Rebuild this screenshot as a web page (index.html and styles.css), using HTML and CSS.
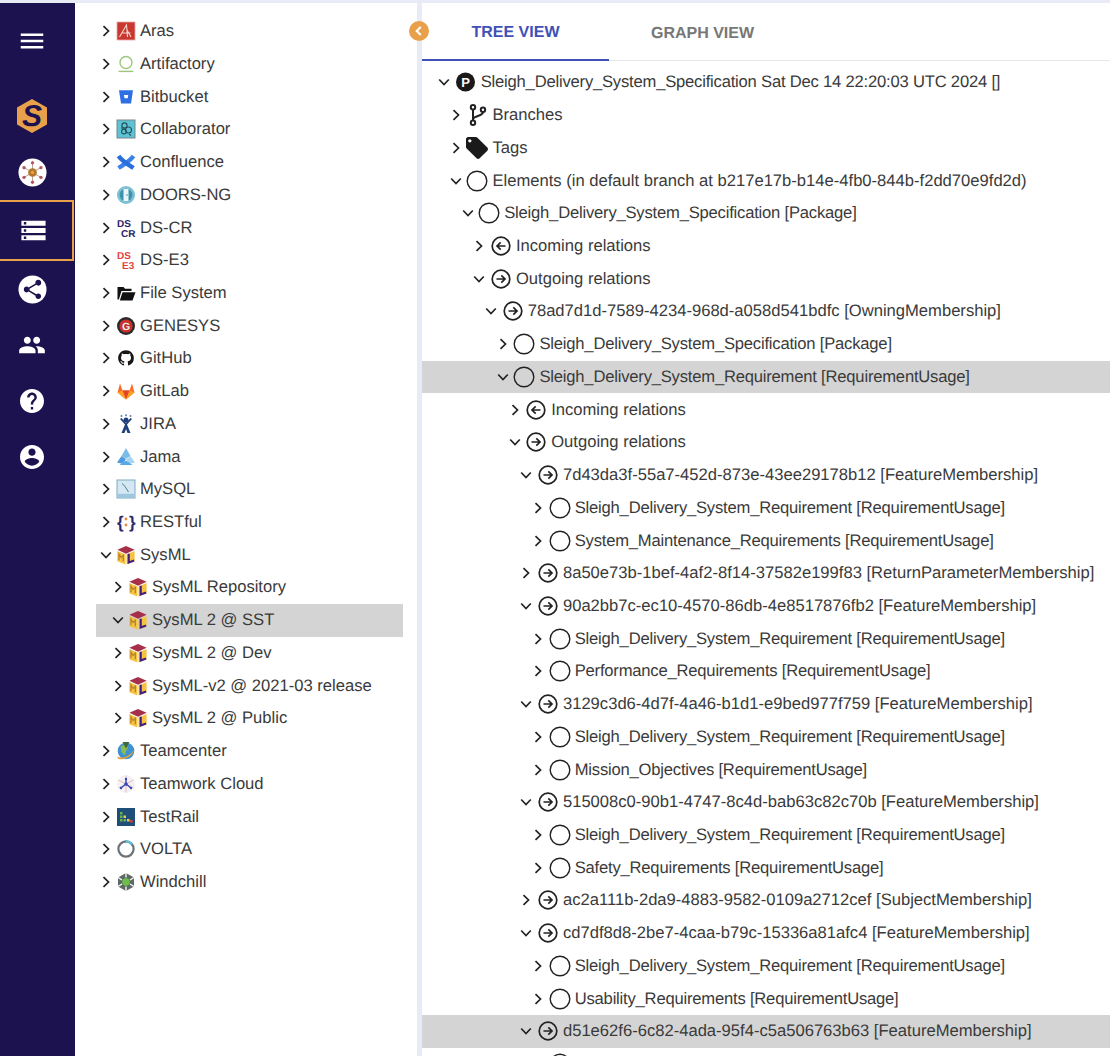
FILE: index.html
```html
<!DOCTYPE html>
<html>
<head>
    <meta charset="UTF-8">
    <meta name="viewport" content="width=device-width, initial-scale=1.0">
    <title>Tree View</title>
    <link rel="stylesheet" href="styles.css">
</head>
<body>
    <svg class="sprite" xmlns="http://www.w3.org/2000/svg">
        <symbol id="i-right" viewBox="0 0 12 12"><path d="M3.5 1.2 8.5 6l-5 4.8" fill="none" stroke="currentColor" stroke-width="1.7"/></symbol>
        <symbol id="i-down" viewBox="0 0 12 12"><path d="M1.2 3.5 6 8.5l4.8-5" fill="none" stroke="currentColor" stroke-width="1.7"/></symbol>
        <symbol id="i-circle" viewBox="0 0 22 22"><circle cx="11" cy="11" r="9.8" fill="none" stroke="#222" stroke-width="1.4"/></symbol>
        <symbol id="i-out" viewBox="0 0 22 22"><circle cx="11" cy="11" r="8.8" fill="none" stroke="#222" stroke-width="1.7"/><path d="M6.5 11h8M11.3 7.4 15 11l-3.7 3.6" fill="none" stroke="#222" stroke-width="1.7"/></symbol>
        <symbol id="i-in" viewBox="0 0 22 22"><circle cx="11" cy="11" r="8.8" fill="none" stroke="#222" stroke-width="1.7"/><path d="M15.5 11h-8M10.7 7.4 7 11l3.7 3.6" fill="none" stroke="#222" stroke-width="1.7"/></symbol>
        <symbol id="i-branch" viewBox="0 0 22 22"><g fill="none" stroke="#222" stroke-width="2"><circle cx="7" cy="3.2" r="2.2"/><circle cx="7" cy="18.8" r="2.2"/><circle cx="17" cy="5.8" r="2.2"/><path d="M7 5.400v11.200M17 8c0 4.500-10 3.400-10 7.600"/></g></symbol>
        <symbol id="i-tag" viewBox="2 2 20 20"><path d="M21.410 11.580l-9-9C12.050 2.220 11.550 2 11 2H4c-1.100 0-2 .9-2 2v7c0 .55.22 1.050.59 1.420l9 9c.36.36.86.58 1.410.58.55 0 1.050-.22 1.410-.59l7-7c.37-.36.59-.86.59-1.410 0-.55-.23-1.060-.59-1.420zM5.500 7C4.670 7 4 6.330 4 5.500S4.670 4 5.500 4 7 4.670 7 5.500 6.330 7 5.500 7z" fill="#1a1a1a"/></symbol>

        <symbol id="i-aras" viewBox="0 0 20 20"><rect x="1" y="1" width="18" height="18" fill="#c9382f" stroke="#e5a9a4" stroke-width=".8"/><path d="M3.500 16 10.500 4l1 12M6.500 12h8M11 9l4 7" fill="none" stroke="#f3d6d2" stroke-width="1.100"/></symbol>
        <symbol id="i-artifactory" viewBox="0 0 20 20"><circle cx="10" cy="8.500" r="6" fill="none" stroke="#9cc77c" stroke-width="1.400"/><path d="M2.500 17.400h15" stroke="#9cc77c" stroke-width="1.400"/></symbol>
        <symbol id="i-bitbucket" viewBox="0 0 20 20"><path d="M3 3.200h14l-2 13.300H5z" fill="#2f6fe4"/><path d="M8 8h4.200l-.5 3.200H8.500z" fill="#fff"/></symbol>
        <symbol id="i-collaborator" viewBox="0 0 20 20"><rect x="1" y="1" width="18" height="18" fill="#5cc3d3" stroke="#77858c" stroke-width="1"/><g fill="none" stroke="#25525f" stroke-width="1.100"><circle cx="8.500" cy="6.500" r="2.600"/><circle cx="12.500" cy="11" r="3"/><circle cx="8" cy="12.500" r="2.400"/><path d="M5 9h3M13 15l2 1.500"/></g></symbol>
        <symbol id="i-confluence" viewBox="0 0 20 20"><g fill="none" stroke-width="4.400"><path d="M17.500 4C14 9 10 11 2.500 16" stroke="#3c82ea"/><path d="M2.500 4C6 9 9.500 11 17.500 16" stroke="#2a6fdc"/></g></symbol>
        <symbol id="i-doors" viewBox="0 0 20 20"><circle cx="10" cy="10" r="9" fill="#7cc0d4"/><circle cx="10" cy="10" r="6.400" fill="#3d93ac"/><path d="M7.500 3.800h5v12.400h-5z" fill="#e9f5f8"/><circle cx="11" cy="10" r=".8" fill="#3d93ac"/></symbol>
        <symbol id="i-folder" viewBox="0 0 20 20"><path d="M1.500 4h6l1.500 1.800h6.500V8H5.500L2.900 16.500H1.500z" fill="#111"/><path d="M6.500 9.300h13L16.500 17.500H3.800z" fill="#111"/></symbol>
        <symbol id="i-github" viewBox="-2.200 -2.200 20.400 20.400"><path d="M8 0C3.580 0 0 3.580 0 8c0 3.540 2.290 6.530 5.470 7.590.4.070.55-.17.55-.38 0-.19-.01-.82-.01-1.490-2.010.37-2.530-.49-2.690-.94-.09-.23-.48-.94-.82-1.130-.28-.15-.68-.52-.01-.53.63-.01 1.080.58 1.230.82.72 1.210 1.870.87 2.330.66.07-.52.28-.87.51-1.070-1.780-.2-3.640-.89-3.640-3.950 0-.87.31-1.590.82-2.150-.08-.2-.36-1.020.08-2.120 0 0 .67-.21 2.200.82.64-.18 1.320-.27 2-.27.68 0 1.360.09 2 .27 1.530-1.040 2.200-.82 2.200-.82.44 1.100.16 1.920.08 2.120.51.56.82 1.270.82 2.150 0 3.070-1.870 3.750-3.650 3.950.29.25.54.73.54 1.480 0 1.070-.01 1.930-.01 2.200 0 .21.15.46.55.38A8.013 8.013 0 0016 8c0-4.420-3.580-8-8-8z" fill="#161616"/></symbol>
        <symbol id="i-gitlab" viewBox="0 0 20 20"><path d="M10 18.500 1.500 11.500 4 2.500l2.500 7h7l2.500-7 2.500 9z" fill="#fc6d26"/><path d="M10 18.500 6.500 9.500h7z" fill="#e24329"/><path d="M10 18.500 1.500 11.500 6.500 9.500zM10 18.500l8.500-7-5-2z" fill="#fca326"/></symbol>
        <symbol id="i-jira" viewBox="0 0 20 20"><circle cx="10" cy="6" r="2.500" fill="#1f3f78"/><path d="M4 5 9 10.500 5.500 19h3L10 15l1.500 4h3L11 10.500l5-5.500-1.500-1L10 9 5.500 4z" fill="#1f3f78"/><g fill="#5f7fb0"><circle cx="5.500" cy="2" r="1"/><circle cx="10" cy="1.300" r="1"/><circle cx="14.500" cy="2" r="1"/></g></symbol>
        <symbol id="i-jama" viewBox="0 0 20 20"><path d="M10 1 14.500 9 10 11.500 5.500 9z" fill="#7cbce8"/><path d="M1 15.500 5.500 9l4.500 3-3 5z" fill="#4d9be0"/><path d="M19 15.500 14.500 9 10 12l3 5z" fill="#a8d5f0"/><path d="M3.500 18h13L10 13.500z" fill="#5aa9e6"/></symbol>
        <symbol id="i-mysql" viewBox="0 0 20 20"><rect x="1" y="1" width="18" height="18" fill="#d3e8f3" stroke="#7fa9bf" stroke-width="1"/><path d="M6 4.500c2 1 4 4.500 6.500 8.500" fill="none" stroke="#55788c" stroke-width="1"/><path d="M2 14.800h16V19H2z" fill="#9cc7dc"/></symbol>
        <symbol id="i-sysml" viewBox="1 0 18 18.500"><path d="M10 1 18 4.500 10 8 2 4.500z" fill="#a6304a"/><path d="M2 5.500 9.500 8.800V18L2 15z" fill="#f6c342"/><path d="M10.500 8.800 18 5.500V15l-7.500 3z" fill="#f6c342"/><path d="M3.500 14V8.500l2 3 2-2V15" fill="none" stroke="#b8832a" stroke-width="1.200"/><path d="M12.500 8v8.200l5-1.800" fill="none" stroke="#44207c" stroke-width="2"/></symbol>
        <symbol id="i-teamcenter" viewBox="1 1 18 18"><circle cx="10" cy="10" r="7.500" fill="#3f92cf"/><path d="M5 6c3-2 6-1 7 1l-2 3-1 4-3-3z" fill="#8cbc54"/><path d="M2 15c4 2 11 1 16-7-2 7-10 11-15 9z" fill="#e6a13a"/><path d="M7 2 13 2 10 8z" fill="#3c6c3a"/></symbol>
        <symbol id="i-teamwork" viewBox="0 0 20 20"><circle cx="10" cy="10" r="9" fill="#f4f1f2"/><g stroke="#e2bcc2" stroke-width="1"><path d="M10 1.500v17M2.500 6l15 8M17.500 6l-15 8"/></g><path d="M10 5v5M10 10l-5 4M10 10l5 4" stroke="#3346b8" stroke-width="1.300"/><g fill="#3346b8"><circle cx="10" cy="10" r="1.700"/><circle cx="10" cy="5" r="1.200"/><circle cx="5" cy="14" r="1.200"/><circle cx="15" cy="14" r="1.200"/></g></symbol>
        <symbol id="i-testrail" viewBox="0 0 20 20"><rect x="1" y="1" width="18" height="18" fill="#1f4e79"/><g fill="#6cb24a"><rect x="4" y="5" width="2.500" height="2.500"/><rect x="4" y="8.500" width="2.500" height="2.500"/><rect x="4" y="12" width="2.500" height="2.500"/><rect x="7.500" y="12" width="2.500" height="2.500"/></g><rect x="7.500" y="8.500" width="2.500" height="2.500" fill="#f2c94c"/><rect x="11" y="12" width="2.500" height="2.500" fill="#f2c94c"/><rect x="14" y="13" width="2.500" height="2.500" fill="#d9413a"/></symbol>
        <symbol id="i-volta" viewBox="0 0 20 20"><circle cx="10" cy="10" r="7.600" fill="none" stroke="#6c7378" stroke-width="2.200"/><path d="M10 2.400a7.600 7.600 0 0 1 6 3" fill="none" stroke="#5cc0d8" stroke-width="2.200"/></symbol>
        <symbol id="i-windchill" viewBox="0 0 20 20"><path d="M10 1 18 5.500v9L10 19l-8-4.500v-9z" fill="#5c6a63"/><path d="M10 1v4.500M18 5.500 14 8M18 14.500 14 12M10 19v-4.500M2 14.500 6 12M2 5.500 6 8" stroke="#fff" stroke-width="1.300"/><circle cx="10" cy="10" r="3.800" fill="#6cbf4b"/></symbol>
    </svg>

    <div class="topline"></div>
    <div class="app">
        <nav class="sidebar">
            <div class="nav-item nav-menu">
                <svg class="nav-icon nav-icon-lg" viewBox="0 0 24 24"><path d="M3 18h18v-2H3v2zm0-5h18v-2H3v2zm0-7v2h18V6H3z" fill="#fff"/></svg>
            </div>
            <div class="nav-item nav-logo">
                <svg class="logo" viewBox="0 0 32 36">
                    <path d="M16 1 31 9.500v17L16 35 1 26.500v-17z" fill="#e9a04b"/>
                    <text x="16" y="28" text-anchor="middle" class="logo-s">S</text>
                </svg>
            </div>
            <div class="nav-item">
                <svg class="nav-icon nav-hub" viewBox="0 0 30 30">
                    <circle cx="15" cy="15" r="14.500" fill="#fff"/>
                    <path d="M15 3v24M4.600 9l20.800 12M25.400 9 4.600 21" stroke="#b9a18f" stroke-width="1"/>
                    <circle cx="15" cy="15" r="4.500" fill="#b5752a"/>
                    <circle cx="15" cy="15" r="1.800" fill="#e9a04b"/>
                    <g fill="#b4545f">
                        <circle cx="15" cy="5" r="1.700"/><circle cx="15" cy="25" r="1.700"/>
                        <circle cx="6.300" cy="10" r="1.700"/><circle cx="23.700" cy="10" r="1.700"/>
                        <circle cx="6.300" cy="20" r="1.700"/><circle cx="23.700" cy="20" r="1.700"/>
                    </g>
                </svg>
            </div>
            <div class="nav-item nav-active">
                <svg class="nav-icon nav-icon-server" viewBox="0 0 24 24"><path d="M2 20h20v-4H2v4zm2-3h2v2H4v-2zM2 4v4h20V4H2zm4 3H4V5h2v2zm-4 7h20v-4H2v4zm2-3h2v2H4v-2z" fill="#fff"/></svg>
            </div>
            <div class="nav-item">
                <svg class="nav-icon nav-hub" viewBox="0 0 30 30">
                    <circle cx="15" cy="15" r="14.500" fill="#fff"/>
                    <g transform="translate(3 3)"><path d="M18 16.080c-.76 0-1.440.3-1.960.77L8.910 12.700c.05-.23.09-.46.09-.7s-.04-.47-.09-.7l7.050-4.110c.54.5 1.250.81 2.040.81 1.660 0 3-1.340 3-3s-1.340-3-3-3-3 1.340-3 3c0 .24.04.47.09.7L8.040 9.810C7.500 9.310 6.790 9 6 9c-1.660 0-3 1.340-3 3s1.340 3 3 3c.79 0 1.500-.31 2.040-.81l7.120 4.160c-.05.21-.08.43-.08.65 0 1.610 1.310 2.920 2.920 2.920s2.920-1.310 2.920-2.920-1.310-2.920-2.920-2.920z" fill="#1b124f"/></g>
                </svg>
            </div>
            <div class="nav-item">
                <svg class="nav-icon nav-icon-people" viewBox="0 0 24 24"><path d="M16 11c1.660 0 2.990-1.340 2.990-3S17.660 5 16 5c-1.660 0-3 1.340-3 3s1.340 3 3 3zm-8 0c1.660 0 2.990-1.340 2.990-3S9.660 5 8 5C6.340 5 5 6.340 5 8s1.340 3 3 3zm0 2c-2.330 0-7 1.170-7 3.500V19h14v-2.500c0-2.330-4.670-3.500-7-3.500zm8 0c-.29 0-.62.02-.97.05 1.160.84 1.970 1.970 1.970 3.450V19h6v-2.500c0-2.330-4.670-3.500-7-3.500z" fill="#fff"/></svg>
            </div>
            <div class="nav-item">
                <svg class="nav-icon nav-icon-round" viewBox="2 2 20 20"><path d="M12 2C6.480 2 2 6.480 2 12s4.480 10 10 10 10-4.480 10-10S17.520 2 12 2zm1 17h-2v-2h2v2zm2.070-7.750l-.9.92C13.450 12.900 13 13.500 13 15h-2v-.5c0-1.100.45-2.100 1.170-2.830l1.240-1.260c.37-.36.59-.86.59-1.410 0-1.100-.9-2-2-2s-2 .9-2 2H8c0-2.210 1.790-4 4-4s4 1.790 4 4c0 .88-.36 1.680-.93 2.250z" fill="#fff"/></svg>
            </div>
            <div class="nav-item">
                <svg class="nav-icon nav-icon-round" viewBox="2 2 20 20"><path d="M12 2C6.480 2 2 6.480 2 12s4.480 10 10 10 10-4.480 10-10S17.520 2 12 2zm0 3c1.660 0 3 1.340 3 3s-1.340 3-3 3-3-1.340-3-3 1.340-3 3-3zm0 14.200c-2.500 0-4.710-1.280-6-3.220.03-1.990 4-3.080 6-3.080 1.990 0 5.970 1.090 6 3.080-1.290 1.940-3.500 3.220-6 3.220z" fill="#fff"/></svg>
            </div>
        </nav>

        <aside class="repos">
            <div class="row"><svg class="chev"><use href="#i-right"/></svg><svg class="ico"><use href="#i-aras"/></svg><span>Aras</span></div>
            <div class="row"><svg class="chev"><use href="#i-right"/></svg><svg class="ico"><use href="#i-artifactory"/></svg><span>Artifactory</span></div>
            <div class="row"><svg class="chev"><use href="#i-right"/></svg><svg class="ico"><use href="#i-bitbucket"/></svg><span>Bitbucket</span></div>
            <div class="row"><svg class="chev"><use href="#i-right"/></svg><svg class="ico"><use href="#i-collaborator"/></svg><span>Collaborator</span></div>
            <div class="row"><svg class="chev"><use href="#i-right"/></svg><svg class="ico"><use href="#i-confluence"/></svg><span>Confluence</span></div>
            <div class="row"><svg class="chev"><use href="#i-right"/></svg><svg class="ico"><use href="#i-doors"/></svg><span>DOORS-NG</span></div>
            <div class="row"><svg class="chev"><use href="#i-right"/></svg><svg class="ico" viewBox="0 0 20 20"><text x="1" y="9" class="svg-bold" font-size="10" fill="#2b2467">DS</text><text x="5" y="18.500" class="svg-bold" font-size="10" fill="#2b2467">CR</text></svg><span>DS-CR</span></div>
            <div class="row"><svg class="chev"><use href="#i-right"/></svg><svg class="ico" viewBox="0 0 20 20"><text x="1" y="9" class="svg-bold" font-size="10" fill="#e2413b">DS</text><text x="6" y="18.500" class="svg-bold" font-size="10" fill="#e2413b">E3</text></svg><span>DS-E3</span></div>
            <div class="row"><svg class="chev"><use href="#i-right"/></svg><svg class="ico"><use href="#i-folder"/></svg><span>File System</span></div>
            <div class="row"><svg class="chev"><use href="#i-right"/></svg><svg class="ico" viewBox="0 0 20 20"><circle cx="10" cy="10" r="9" fill="#2a2a2a"/><circle cx="10" cy="10" r="6.600" fill="#c8312c"/><text x="10" y="13.800" text-anchor="middle" class="svg-bold" font-size="10.500" fill="#eee">G</text></svg><span>GENESYS</span></div>
            <div class="row"><svg class="chev"><use href="#i-right"/></svg><svg class="ico"><use href="#i-github"/></svg><span>GitHub</span></div>
            <div class="row"><svg class="chev"><use href="#i-right"/></svg><svg class="ico"><use href="#i-gitlab"/></svg><span>GitLab</span></div>
            <div class="row"><svg class="chev"><use href="#i-right"/></svg><svg class="ico"><use href="#i-jira"/></svg><span>JIRA</span></div>
            <div class="row"><svg class="chev"><use href="#i-right"/></svg><svg class="ico"><use href="#i-jama"/></svg><span>Jama</span></div>
            <div class="row"><svg class="chev"><use href="#i-right"/></svg><svg class="ico"><use href="#i-mysql"/></svg><span>MySQL</span></div>
            <div class="row"><svg class="chev"><use href="#i-right"/></svg><svg class="ico" viewBox="0 0 20 20"><text x="1" y="16" class="svg-bold" font-size="17" fill="#2f2a6b">{</text><text x="13" y="16" class="svg-bold" font-size="17" fill="#2f2a6b">}</text><circle cx="10" cy="7" r="1.400" fill="#e88b3a"/><circle cx="10" cy="13" r="1.400" fill="#e88b3a"/></svg><span>RESTful</span></div>
            <div class="row"><svg class="chev"><use href="#i-down"/></svg><svg class="ico"><use href="#i-sysml"/></svg><span>SysML</span></div>
            <div class="row sub"><svg class="chev"><use href="#i-right"/></svg><svg class="ico"><use href="#i-sysml"/></svg><span>SysML Repository</span></div>
            <div class="row sub selected"><svg class="chev"><use href="#i-down"/></svg><svg class="ico"><use href="#i-sysml"/></svg><span>SysML 2 @ SST</span></div>
            <div class="row sub"><svg class="chev"><use href="#i-right"/></svg><svg class="ico"><use href="#i-sysml"/></svg><span>SysML 2 @ Dev</span></div>
            <div class="row sub"><svg class="chev"><use href="#i-right"/></svg><svg class="ico"><use href="#i-sysml"/></svg><span>SysML-v2 @ 2021-03 release</span></div>
            <div class="row sub"><svg class="chev"><use href="#i-right"/></svg><svg class="ico"><use href="#i-sysml"/></svg><span>SysML 2 @ Public</span></div>
            <div class="row"><svg class="chev"><use href="#i-right"/></svg><svg class="ico"><use href="#i-teamcenter"/></svg><span>Teamcenter</span></div>
            <div class="row"><svg class="chev"><use href="#i-right"/></svg><svg class="ico"><use href="#i-teamwork"/></svg><span>Teamwork Cloud</span></div>
            <div class="row"><svg class="chev"><use href="#i-right"/></svg><svg class="ico"><use href="#i-testrail"/></svg><span>TestRail</span></div>
            <div class="row"><svg class="chev"><use href="#i-right"/></svg><svg class="ico"><use href="#i-volta"/></svg><span>VOLTA</span></div>
            <div class="row"><svg class="chev"><use href="#i-right"/></svg><svg class="ico"><use href="#i-windchill"/></svg><span>Windchill</span></div>
        </aside>

        <div class="divider">
            <button class="collapse" aria-label="Collapse">
                <svg viewBox="0 0 12 12"><path d="M7.500 2.500 4 6l3.500 3.500" fill="none" stroke="#fff" stroke-width="1.800"/></svg>
            </button>
        </div>

        <main class="content">
            <div class="tabs">
                <div class="tab tab-active">TREE VIEW</div>
                <div class="tab">GRAPH VIEW</div>
            </div>
            <div class="tree">
                <div class="node d0"><svg class="chev"><use href="#i-down"/></svg><svg class="ico" viewBox="0 0 22 22"><circle cx="10.500" cy="11" r="9.500" fill="#1a1a1a"/><text x="10.500" y="15.600" text-anchor="middle" class="svg-bold" font-size="13" fill="#fff">P</text></svg><span>Sleigh_Delivery_System_Specification Sat Dec 14 22:20:03 UTC 2024 []</span></div>
                <div class="node d1"><svg class="chev"><use href="#i-right"/></svg><svg class="ico"><use href="#i-branch"/></svg><span>Branches</span></div>
                <div class="node d1"><svg class="chev"><use href="#i-right"/></svg><svg class="ico"><use href="#i-tag"/></svg><span>Tags</span></div>
                <div class="node d1"><svg class="chev"><use href="#i-down"/></svg><svg class="ico"><use href="#i-circle"/></svg><span>Elements (in default branch at b217e17b-b14e-4fb0-844b-f2dd70e9fd2d)</span></div>
                <div class="node d2"><svg class="chev"><use href="#i-down"/></svg><svg class="ico"><use href="#i-circle"/></svg><span>Sleigh_Delivery_System_Specification [Package]</span></div>
                <div class="node d3"><svg class="chev"><use href="#i-right"/></svg><svg class="ico"><use href="#i-in"/></svg><span>Incoming relations</span></div>
                <div class="node d3"><svg class="chev"><use href="#i-down"/></svg><svg class="ico"><use href="#i-out"/></svg><span>Outgoing relations</span></div>
                <div class="node d4"><svg class="chev"><use href="#i-down"/></svg><svg class="ico"><use href="#i-out"/></svg><span>78ad7d1d-7589-4234-968d-a058d541bdfc [OwningMembership]</span></div>
                <div class="node d5"><svg class="chev"><use href="#i-right"/></svg><svg class="ico"><use href="#i-circle"/></svg><span>Sleigh_Delivery_System_Specification [Package]</span></div>
                <div class="node d5 selected"><svg class="chev"><use href="#i-down"/></svg><svg class="ico"><use href="#i-circle"/></svg><span>Sleigh_Delivery_System_Requirement [RequirementUsage]</span></div>
                <div class="node d6"><svg class="chev"><use href="#i-right"/></svg><svg class="ico"><use href="#i-in"/></svg><span>Incoming relations</span></div>
                <div class="node d6"><svg class="chev"><use href="#i-down"/></svg><svg class="ico"><use href="#i-out"/></svg><span>Outgoing relations</span></div>
                <div class="node d7"><svg class="chev"><use href="#i-down"/></svg><svg class="ico"><use href="#i-out"/></svg><span>7d43da3f-55a7-452d-873e-43ee29178b12 [FeatureMembership]</span></div>
                <div class="node d8"><svg class="chev"><use href="#i-right"/></svg><svg class="ico"><use href="#i-circle"/></svg><span>Sleigh_Delivery_System_Requirement [RequirementUsage]</span></div>
                <div class="node d8"><svg class="chev"><use href="#i-right"/></svg><svg class="ico"><use href="#i-circle"/></svg><span>System_Maintenance_Requirements [RequirementUsage]</span></div>
                <div class="node d7"><svg class="chev"><use href="#i-right"/></svg><svg class="ico"><use href="#i-out"/></svg><span>8a50e73b-1bef-4af2-8f14-37582e199f83 [ReturnParameterMembership]</span></div>
                <div class="node d7"><svg class="chev"><use href="#i-down"/></svg><svg class="ico"><use href="#i-out"/></svg><span>90a2bb7c-ec10-4570-86db-4e8517876fb2 [FeatureMembership]</span></div>
                <div class="node d8"><svg class="chev"><use href="#i-right"/></svg><svg class="ico"><use href="#i-circle"/></svg><span>Sleigh_Delivery_System_Requirement [RequirementUsage]</span></div>
                <div class="node d8"><svg class="chev"><use href="#i-right"/></svg><svg class="ico"><use href="#i-circle"/></svg><span>Performance_Requirements [RequirementUsage]</span></div>
                <div class="node d7"><svg class="chev"><use href="#i-down"/></svg><svg class="ico"><use href="#i-out"/></svg><span>3129c3d6-4d7f-4a46-b1d1-e9bed977f759 [FeatureMembership]</span></div>
                <div class="node d8"><svg class="chev"><use href="#i-right"/></svg><svg class="ico"><use href="#i-circle"/></svg><span>Sleigh_Delivery_System_Requirement [RequirementUsage]</span></div>
                <div class="node d8"><svg class="chev"><use href="#i-right"/></svg><svg class="ico"><use href="#i-circle"/></svg><span>Mission_Objectives [RequirementUsage]</span></div>
                <div class="node d7"><svg class="chev"><use href="#i-down"/></svg><svg class="ico"><use href="#i-out"/></svg><span>515008c0-90b1-4747-8c4d-bab63c82c70b [FeatureMembership]</span></div>
                <div class="node d8"><svg class="chev"><use href="#i-right"/></svg><svg class="ico"><use href="#i-circle"/></svg><span>Sleigh_Delivery_System_Requirement [RequirementUsage]</span></div>
                <div class="node d8"><svg class="chev"><use href="#i-right"/></svg><svg class="ico"><use href="#i-circle"/></svg><span>Safety_Requirements [RequirementUsage]</span></div>
                <div class="node d7"><svg class="chev"><use href="#i-right"/></svg><svg class="ico"><use href="#i-out"/></svg><span>ac2a111b-2da9-4883-9582-0109a2712cef [SubjectMembership]</span></div>
                <div class="node d7"><svg class="chev"><use href="#i-down"/></svg><svg class="ico"><use href="#i-out"/></svg><span>cd7df8d8-2be7-4caa-b79c-15336a81afc4 [FeatureMembership]</span></div>
                <div class="node d8"><svg class="chev"><use href="#i-right"/></svg><svg class="ico"><use href="#i-circle"/></svg><span>Sleigh_Delivery_System_Requirement [RequirementUsage]</span></div>
                <div class="node d8"><svg class="chev"><use href="#i-right"/></svg><svg class="ico"><use href="#i-circle"/></svg><span>Usability_Requirements [RequirementUsage]</span></div>
                <div class="node d7 selected"><svg class="chev"><use href="#i-down"/></svg><svg class="ico"><use href="#i-out"/></svg><span>d51e62f6-6c82-4ada-95f4-c5a506763b63 [FeatureMembership]</span></div>
                <div class="node d8 clipped"><svg class="chev"><use href="#i-right"/></svg><svg class="ico"><use href="#i-circle"/></svg></div>
            </div>
        </main>
    </div>
</body>
</html>
```

FILE: styles.css
```css
:root {
    --navy: #1b124f;
    --orange: #e9a04b;
    --line: #e8eaf5;
    --text: #3a3a3a;
    --blue: #3f51b5;
    --row-height: 32.72px;
}

html, body {
    margin: 0;
    height: 100%;
    overflow: hidden;
}

body {
    font-family: "Liberation Sans", Arial, sans-serif;
    font-size: 16.6px;
    text-rendering: geometricPrecision;
    color: var(--text);
    background: #fff;
}

.sprite {
    position: absolute;
    width: 0;
    height: 0;
}

.svg-bold {
    font-family: "Liberation Sans", Arial, sans-serif;
    font-weight: bold;
}

.topline {
    height: 3px;
    background: var(--line);
}

.app {
    display: flex;
    height: calc(100% - 3px);
}

/* left nav */
.sidebar {
    flex: 0 0 75px;
    background: var(--navy);
    display: flex;
    flex-direction: column;
}

.nav-item {
    height: 56px;
    flex: none;
    display: flex;
    align-items: center;
    justify-content: center;
    box-sizing: border-box;
    padding-right: 11px;
}

.nav-menu {
    height: 76px;
}

.nav-logo {
    margin-top: 9px;
}

.nav-active {
    height: 61px;
    width: 74px;
    padding-right: 6px;
    border: 2px solid var(--orange);
    border-left: none;
}

.nav-icon {
    width: 28px;
    height: 28px;
}

.nav-icon-lg {
    width: 30px;
    height: 30px;
}

.nav-icon-server {
    width: 29px;
    height: 29px;
}

.nav-icon-people {
    width: 28px;
    height: 28px;
}

.nav-icon-round {
    width: 24px;
    height: 24px;
}

.nav-hub {
    width: 29px;
    height: 29px;
}

.logo {
    width: 32px;
    height: 36px;
}

.logo-s {
    font-family: "Liberation Sans", Arial, sans-serif;
    font-size: 30px;
    font-weight: bold;
    font-style: italic;
    fill: var(--navy);
}

/* repository list */
.repos {
    flex: 0 0 342px;
    box-sizing: border-box;
    padding: 11.9px 14px 0 21px;
}

.row {
    height: var(--row-height);
    display: flex;
    align-items: center;
    padding-left: 4px;
    white-space: nowrap;
}

.row.sub {
    padding-left: 16px;
}

.row .ico {
    width: 20px;
    height: 20px;
    margin: 0 4.5px 0 3.5px;
    flex: none;
}

.chev {
    width: 12px;
    height: 12px;
    flex: none;
    color: #222;
}

.selected {
    background: #d4d4d4;
}

/* splitter */
.divider {
    flex: 0 0 5px;
    background: var(--line);
    position: relative;
}

.collapse {
    position: absolute;
    top: 18px;
    left: -8px;
    width: 20px;
    height: 20px;
    padding: 3px;
    border: none;
    border-radius: 50%;
    background: var(--orange);
}

.collapse svg {
    display: block;
    width: 14px;
    height: 14px;
}

/* right side */
.content {
    flex: 1;
    min-width: 0;
    overflow: hidden;
}

.tabs {
    display: flex;
    height: 58px;
    box-sizing: border-box;
    border-bottom: 1px solid #e6e6e6;
}

.tab {
    width: 187px;
    height: 58px;
    box-sizing: border-box;
    padding-top: 4px;
    display: flex;
    align-items: center;
    justify-content: center;
    font-size: 16px;
    font-weight: bold;
    color: #777;
}

.tab-active {
    color: var(--blue);
    border-bottom: 2px solid var(--blue);
}

.tree {
    padding-top: 5.1px;
}

.node {
    height: var(--row-height);
    display: flex;
    align-items: center;
    white-space: nowrap;
}

.node .ico {
    width: 22px;
    height: 22px;
    margin: 0 4.2px 0 4.5px;
    flex: none;
}

/* element names run a bit tighter than ids */
.d0 span, .d2 span, .d5 span, .d8 span {
    letter-spacing: -0.2px;
}

.d0 { padding-left: 16px; }
.d1 { padding-left: 27.75px; }
.d2 { padding-left: 39.5px; }
.d3 { padding-left: 51.25px; }
.d4 { padding-left: 63px; }
.d5 { padding-left: 74.75px; }
.d6 { padding-left: 86.5px; }
.d7 { padding-left: 98.25px; }
.d8 { padding-left: 110px; }
```
